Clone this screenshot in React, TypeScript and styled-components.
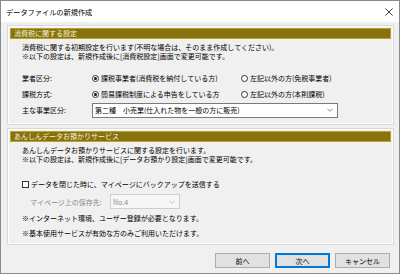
import styled, { createGlobalStyle } from 'styled-components';

const GlobalStyle = createGlobalStyle`
  html, body {
    margin: 0;
    padding: 0;
    background: #f0f0f0;
  }
  body {
    font-family: "Noto Sans CJK JP", "Noto Sans", sans-serif;
    font-size: 7px;
    color: #000;
  }
`;

const businessLabel = '第二種　小売業(仕入れた物を一般の方に販売)';

const App = () => {
  return (
    <Window>
      <GlobalStyle />
      <TitleBar>
        <Title>データファイルの新規作成</Title>
        <CloseIcon viewBox="0 0 9 9">
          <path d="M0.5 0.5 L8.5 8.5 M8.5 0.5 L0.5 8.5" stroke="#222" strokeWidth="1" />
        </CloseIcon>
      </TitleBar>
      <Body>
        <Panel $height={100}>
          <PanelHeader>消費税に関する設定</PanelHeader>
          <PanelContent>
            <Description>
              <div>消費税に関する初期設定を行います(不明な場合は、そのまま作成してください)。</div>
              <div>※以下の設定は、新規作成後に[消費税設定]画面で変更可能です。</div>
            </Description>
            <FormRows>
              <FormRow>
                <FieldLabel>業者区分:</FieldLabel>
                <RadioOption $width={149}>
                  <Radio $checked />
                  課税事業者(消費税を納付している方)
                </RadioOption>
                <RadioOption>
                  <Radio />
                  左記以外の方(免税事業者)
                </RadioOption>
              </FormRow>
              <FormRow>
                <FieldLabel>課税方式:</FieldLabel>
                <RadioOption $width={149}>
                  <Radio $checked />
                  簡易課税制度による申告をしている方
                </RadioOption>
                <RadioOption>
                  <Radio />
                  左記以外の方(本則課税)
                </RadioOption>
              </FormRow>
              <FormRow>
                <FieldLabel>主な事業区分:</FieldLabel>
                <Select $width={246}>
                  <span>{businessLabel}</span>
                  <Chevron viewBox="0 0 7 4">
                    <path d="M0.5 0.5 L3.5 3.5 L6.5 0.5" fill="none" stroke="#555" strokeWidth="0.8" />
                  </Chevron>
                </Select>
              </FormRow>
            </FormRows>
          </PanelContent>
        </Panel>

        <Panel $height={117}>
          <PanelHeader>あんしんデータお預かりサービス</PanelHeader>
          <PanelContent>
            <Description>
              <div>あんしんデータお預かりサービスに関する設定を行います。</div>
              <div>※以下の設定は、新規作成後に[データお預かり設定]画面で変更可能です。</div>
            </Description>
            <CheckRow>
              <Checkbox />
              データを閉じた時に、マイページにバックアップを送信する
            </CheckRow>
            <StorageRow>
              <DisabledLabel>マイページ上の保存先:</DisabledLabel>
              <Select $width={70} $disabled>
                <span>No.4</span>
                <Chevron viewBox="0 0 7 4">
                  <path d="M0.5 0.5 L3.5 3.5 L6.5 0.5" fill="none" stroke="#aaa" strokeWidth="0.8" />
                </Chevron>
              </Select>
            </StorageRow>
            <Note $gap={5}>※インターネット環境、ユーザー登録が必要となります。</Note>
            <Note $gap={6}>※基本使用サービスが有効な方のみご利用いただけます。</Note>
          </PanelContent>
        </Panel>

        <ButtonBar>
          <Button>前へ</Button>
          <Button $primary>次へ</Button>
          <Button>キャンセル</Button>
        </ButtonBar>
      </Body>
    </Window>
  );
};

export default App;

const Window = styled.div`
  width: 400px;
  height: 274px;
  box-sizing: border-box;
  border: 1px solid #8a8a8a;
  background: #f0f0f0;
  display: flex;
  flex-direction: column;
`;

const TitleBar = styled.div`
  height: 21px;
  flex-shrink: 0;
  background: #fff;
  display: flex;
  align-items: center;
  justify-content: space-between;
  padding: 0 6px 0 5px;
`;

const Title = styled.div`
  font-size: 7.2px;
`;

const CloseIcon = styled.svg`
  width: 8px;
  height: 8px;
`;

const Body = styled.div`
  flex: 1;
  display: flex;
  flex-direction: column;
  padding: 3px 5px 6px 6px;
  gap: 3px;
`;

const Panel = styled.section<{ $height: number }>`
  height: ${(p) => p.$height}px;
  flex-shrink: 0;
  box-sizing: border-box;
  border: 1px solid #d8d8d8;
  box-shadow: inset 0 0 0 1px #fdfdfd;
  padding: 2px;
`;

const PanelHeader = styled.div`
  height: 11px;
  box-sizing: border-box;
  background: #87720e;
  border: 1px solid #b9a52c;
  color: #f6f1d8;
  font-size: 7px;
  line-height: 9px;
  padding-left: 3px;
`;

const PanelContent = styled.div`
  padding: 4px 12px 2px 12px;
`;

const Description = styled.div`
  line-height: 9px;
`;

const FormRows = styled.div`
  margin-top: 9px;
  display: flex;
  flex-direction: column;
`;

const FormRow = styled.div`
  height: 16px;
  flex-shrink: 0;
  display: flex;
  align-items: center;
`;

const FieldLabel = styled.div`
  width: 70px;
`;

const RadioOption = styled.label<{ $width?: number }>`
  display: flex;
  align-items: center;
  gap: 1px;
  ${(p) => (p.$width ? `width: ${p.$width}px;` : '')}
`;

const Radio = styled.span<{ $checked?: boolean }>`
  width: 7px;
  height: 7px;
  box-sizing: border-box;
  border: 1px solid #333;
  border-radius: 50%;
  background: #fff;
  margin-right: 1px;
  display: inline-flex;
  align-items: center;
  justify-content: center;

  &::after {
    content: '';
    width: 3px;
    height: 3px;
    border-radius: 50%;
    background: ${(p) => (p.$checked ? '#111' : 'transparent')};
  }
`;

const Select = styled.div<{ $width: number; $disabled?: boolean }>`
  width: ${(p) => p.$width}px;
  height: 15px;
  box-sizing: border-box;
  border: 1px solid ${(p) => (p.$disabled ? '#cfcfcf' : '#7a7a7a')};
  background: ${(p) => (p.$disabled ? '#f7f7f7' : '#fff')};
  color: ${(p) => (p.$disabled ? '#8a8a8a' : '#000')};
  display: flex;
  align-items: center;
  justify-content: space-between;
  padding: 0 4px 0 2px;
`;

const Chevron = styled.svg`
  width: 6px;
  height: 4px;
`;

const CheckRow = styled.label`
  margin-top: 15px;
  height: 10px;
  display: flex;
  align-items: center;
  gap: 2px;
`;

const Checkbox = styled.span`
  width: 7px;
  height: 7px;
  box-sizing: border-box;
  border: 1px solid #333;
  background: #fff;
`;

const StorageRow = styled.div`
  margin-top: 5px;
  display: flex;
  align-items: center;
`;

const DisabledLabel = styled.div`
  width: 88px;
  padding-left: 8px;
  box-sizing: border-box;
  color: #8a8a8a;
`;

const Note = styled.div<{ $gap?: number }>`
  margin-top: ${(p) => p.$gap ?? 3}px;
  line-height: 9px;
`;

const ButtonBar = styled.div`
  margin-top: 5px;
  display: flex;
  justify-content: flex-end;
  gap: 5px;
  padding-right: 4px;
`;

const Button = styled.button<{ $primary?: boolean }>`
  width: 55px;
  height: 15px;
  box-sizing: border-box;
  font-family: inherit;
  font-size: 7px;
  padding: 0;
  background: #e1e1e1;
  border: 1px solid ${(p) => (p.$primary ? '#0078d7' : '#adadad')};
  ${(p) => (p.$primary ? 'box-shadow: inset 0 0 0 1px #0078d7;' : '')}
  color: #000;
`;
